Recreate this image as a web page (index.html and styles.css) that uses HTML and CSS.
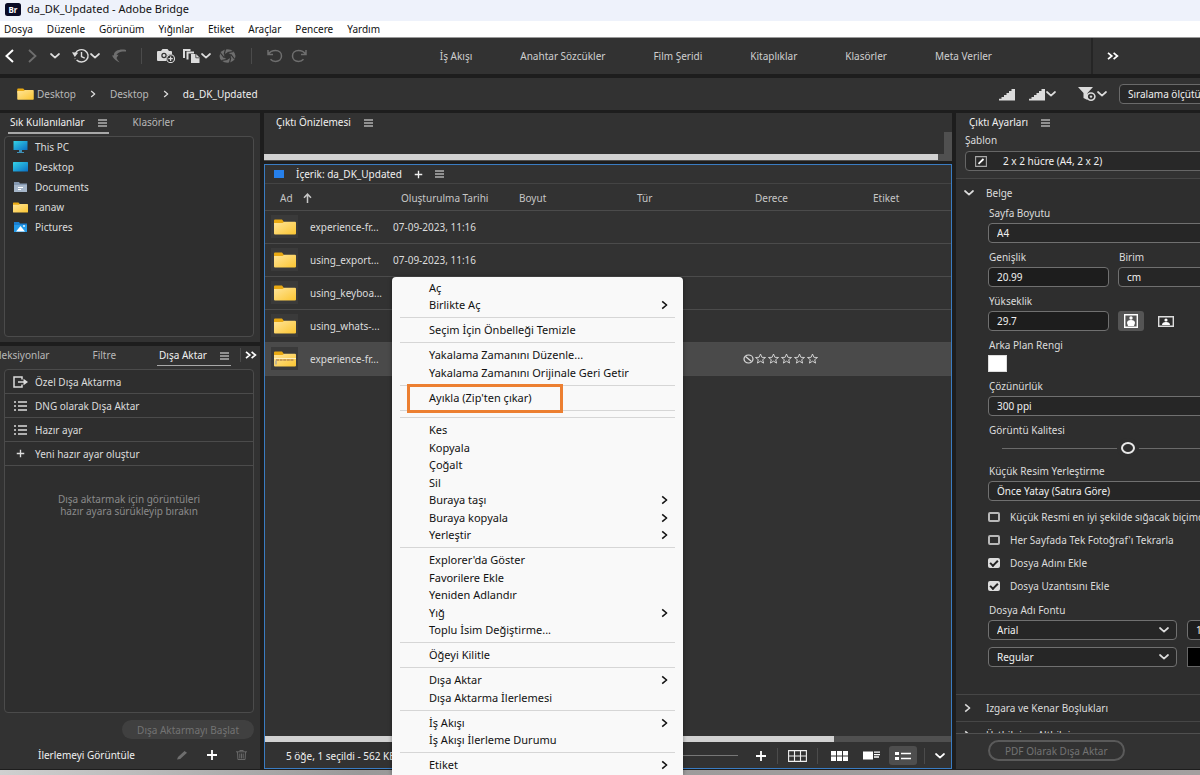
FILE: index.html
```html
<!DOCTYPE html>
<html lang="tr">
<head>
<meta charset="utf-8">
<title>da_DK_Updated - Adobe Bridge</title>
<link rel="stylesheet" href="styles.css">
</head>
<body>
<svg class="sprite" aria-hidden="true">
  <defs>
    <linearGradient id="g-folder" x1="0" y1="0" x2="1" y2="1"><stop offset="0" stop-color="#ffe59a"/><stop offset="1" stop-color="#fbc531"/></linearGradient>
    <linearGradient id="g-screen" x1="0" y1="0" x2="1" y2="1"><stop offset="0" stop-color="#35d3e6"/><stop offset="1" stop-color="#0a6fc4"/></linearGradient>
  </defs>
  <symbol id="down" viewBox="0 0 10 6"><path d="M1 1l4 3.600L9 1" fill="none" stroke="currentColor" stroke-width="1.700" stroke-linecap="round" stroke-linejoin="round"/></symbol>
  <symbol id="right" viewBox="0 0 7 10"><path d="M1.200 1.400L5.600 5l-4.400 3.600" fill="none" stroke="currentColor" stroke-width="1.600" stroke-linejoin="round"/></symbol>
  <symbol id="more" viewBox="0 0 12 8"><path d="M1 .8L4.800 4 1 7.200M6.600.8l3.800 3.200-3.800 3.200" fill="none" stroke="currentColor" stroke-width="1.700"/></symbol>
  <symbol id="burger" viewBox="0 0 9 8"><path d="M0 1h9M0 4h9M0 7h9" stroke="currentColor"/></symbol>
  <symbol id="plus" viewBox="0 0 12 12"><path d="M6 1v10M1 6h10" stroke="currentColor" stroke-width="1.800"/></symbol>
  <symbol id="folder" viewBox="0 0 22 16"><path d="M0 1.500Q0 .5 1 .5h7l2 2.500h11v4H0z" fill="#e9a912"/><path d="M0 4h8.500l1.800-1.200H21q1 0 1 1V14.500q0 1-1 1H1q-1 0-1-1z" fill="url(#g-folder)"/></symbol>
  <symbol id="list" viewBox="0 0 13 12"><path d="M4 2h9M4 6h9M4 10h9" stroke="currentColor" stroke-width="1.300"/><path d="M1 1v2M1 5v2M1 9v2" stroke="currentColor" stroke-width="1.500"/></symbol>
  <symbol id="star" viewBox="0 0 12 11"><path d="M6 1l1.400 3.300 3.600.2-2.800 2.200.9 3.400L6 8.200l-3.100 1.900.9-3.400L1 4.500l3.600-.2z" fill="none" stroke="currentColor" stroke-width=".9"/></symbol>
  <symbol id="undo" viewBox="0 0 17 14"><path d="M2 1v4.500h5M2.300 5.400C4 2.800 6.500 1.600 9.500 1.600c3.600 0 6 2.300 6 5.400s-2.500 5.400-6 5.400c-2.300 0-3.900-.9-5-2.200" fill="none" stroke="currentColor" stroke-width="1.500"/></symbol>
  <symbol id="steps" viewBox="0 0 16 13"><path d="M0 12.500v-1.700h2.500V9H5V7h2.500V5H10V3h2.500V1H16v11.500z" fill="currentColor"/></symbol>
</svg>

<div class="app">
  <header class="titlebar">
    <svg class="logo" viewBox="0 0 16 13" aria-hidden="true"><rect width="16" height="13" rx="2.500" fill="#0a0c26"/><text x="8" y="9.500" text-anchor="middle">Br</text></svg>
    <span>da_DK_Updated - Adobe Bridge</span>
  </header>

  <nav class="menubar" aria-label="Menü">
    <button>Dosya</button><button>Düzenle</button><button>Görünüm</button><button>Yığınlar</button><button>Etiket</button><button>Araçlar</button><button>Pencere</button><button>Yardım</button>
  </nav>

  <div class="toolbar">
    <div class="tools tools-nav">
      <button aria-label="Geri" class="bright"><svg width="11" height="14" viewBox="0 0 11 14"><path d="M9 1L2.500 7 9 13" fill="none" stroke="currentColor" stroke-width="2"/></svg></button>
      <button aria-label="İleri" class="dim"><svg width="11" height="14" viewBox="0 0 11 14"><path d="M2 1l6.500 6L2 13" fill="none" stroke="currentColor" stroke-width="1.800"/></svg></button>
      <button aria-label="Üst klasörler"><svg width="10" height="6"><use href="#down"/></svg></button>
      <button aria-label="Son kullanılanlar"><svg width="18" height="16" viewBox="0 0 18 16"><path d="M3.500 5.200A6.600 6.200 0 1 1 4.600 12" fill="none" stroke="currentColor" stroke-width="1.400"/><path d="M0 4.300l6.200.4L2.800 9z" fill="currentColor"/><path d="M9.500 4v4.600l3.200 1.600" fill="none" stroke="currentColor" stroke-width="1.400"/><path d="M3 10.500l.2.400" stroke="currentColor" stroke-width="1.600"/></svg><svg width="10" height="6"><use href="#down"/></svg></button>
      <button aria-label="Uygulamaya dön" class="dim"><svg width="14" height="14" viewBox="0 0 14 14"><path d="M14 1C7-.5 1 2.500 2 7l2.600.3C4 4.500 8 2 14 2.600z" fill="currentColor"/><path d="M0 6.500l6.500-.8L4.500 9q.8 2.200 3.200 4.500Q2.500 11.500 0 6.500z" fill="currentColor"/></svg></button>
    </div>
    <span class="sep"></span>
    <div class="tools tools-get">
      <button aria-label="Kameradan fotoğraf al"><svg width="18" height="14" viewBox="0 0 18 14"><path d="M0 3q0-1 1-1h3l1.500-2h5L12 2h2q1 0 1 1v2.400a4.800 4.600 0 0 0-5.500 6.600H1q-1 0-1-1z" fill="currentColor"/><circle cx="7" cy="6.500" r="2.700" fill="#323232"/><circle cx="7" cy="6.500" r="1.400" fill="currentColor"/><circle cx="13.600" cy="9.700" r="3.900" fill="#323232" stroke="currentColor" stroke-width="1.100"/><path d="M13.600 7.500v4.400M11.400 9.700h4.400" stroke="currentColor" stroke-width="1.200"/></svg></button>
      <button aria-label="Düzelt"><svg width="18" height="14" viewBox="0 0 18 14"><path d="M1 9V1h6.500M4.500 10.500v-7h6.500" fill="none" stroke="currentColor" stroke-width="2"/><path d="M8 5h5l3.500 3.500V14H8z" fill="currentColor"/><path d="M12.800 5v3.800h3.700" fill="none" stroke="#323232" stroke-width=".8"/></svg><svg width="10" height="6"><use href="#down"/></svg></button>
      <button aria-label="Camera Raw'da aç" class="dim"><svg width="17" height="14" viewBox="0 0 17 14"><ellipse cx="8.500" cy="7" rx="8" ry="6.800" fill="currentColor"/><path d="M8.500 3.600l3.300 1.700v3.400l-3.300 1.700-3.300-1.700V5.300z" fill="#323232"/><path d="M8.500 3.600L14.500 2.500M11.800 5.300L15.500 10M11.800 8.700L10.500 14M8.500 10.400l-6 1.100M5.200 8.700L1.500 4M5.200 5.300L6.500 0" stroke="#323232" stroke-width="1.200"/></svg></button>
    </div>
    <span class="sep"></span>
    <div class="tools tools-rot">
      <button aria-label="Sola döndür" class="dim"><svg width="17" height="14"><use href="#undo"/></svg></button>
      <button aria-label="Sağa döndür" class="dim"><svg class="flip" width="17" height="14"><use href="#undo"/></svg></button>
    </div>
    <nav class="workspaces" aria-label="Çalışma alanları">
      <button>İş Akışı</button><button>Anahtar Sözcükler</button><button>Film Şeridi</button><button>Kitaplıklar</button><button>Klasörler</button><button>Meta Veriler</button>
    </nav>
    <div class="ws-more"><button aria-label="Diğer çalışma alanları" class="bright"><svg width="12" height="8"><use href="#more"/></svg></button></div>
  </div>

  <div class="pathbar">
    <nav class="crumbs" aria-label="Yol">
      <a href="#desktop"><svg width="17" height="12"><use href="#folder"/></svg>Desktop</a>
      <svg width="6" height="8"><use href="#right"/></svg>
      <a href="#desktop2">Desktop</a>
      <svg width="6" height="8"><use href="#right"/></svg>
      <a href="#current" class="current">da_DK_Updated</a>
    </nav>
    <div class="path-tools">
      <button aria-label="Hızlı küçük resimler"><svg width="16" height="13"><use href="#steps"/></svg></button>
      <button aria-label="Küçük resim kalitesi"><svg width="16" height="13"><use href="#steps"/></svg><svg width="10" height="6"><use href="#down"/></svg></button>
      <span class="sep"></span>
      <button aria-label="Filtrele"><svg width="18" height="14" viewBox="0 0 18 14"><path d="M0 0h15L9.500 6v7L5.500 11V6z" fill="currentColor"/><ellipse cx="13" cy="9.600" rx="3.900" ry="3.600" fill="#323232" stroke="currentColor" stroke-width="1.600"/><circle cx="13" cy="9.600" r="1.200" fill="currentColor"/></svg><svg width="10" height="6"><use href="#down"/></svg></button>
      <select class="sort" aria-label="Sıralama"><option>Sıralama ölçütü</option></select>
    </div>
  </div>

  <main class="panels">
    <div class="left">
      <section class="panel favorites">
        <div class="tabs">
          <button class="tab on">Sık Kullanılanlar <svg width="9" height="8"><use href="#burger"/></svg></button>
          <button class="tab">Klasörler</button>
        </div>
        <ul class="well">
          <li><svg width="15" height="12" viewBox="0 0 15 12"><rect x=".5" width="14" height="9" fill="url(#g-screen)"/><path d="M6 9h3v2h2v1H4v-1h2z" fill="#3f8fb5"/></svg>This PC</li>
          <li><svg width="15" height="12" viewBox="0 0 15 12"><rect y="1" width="15" height="9.500" rx=".5" fill="url(#g-screen)"/></svg>Desktop</li>
          <li><svg width="15" height="12" viewBox="0 0 15 12"><path d="M1 1h5l1 1.500h7V11H1z" fill="#8598b0"/><path d="M1 4h13v7H1z" fill="#a6b6c9"/><path d="M5 6.500h5M5 8.500h3" stroke="#fff"/></svg>Documents</li>
          <li><svg width="15" height="11"><use href="#folder"/></svg>ranaw</li>
          <li><svg width="15" height="12" viewBox="0 0 15 12"><path d="M1 1h5l1 1.500h7V11H1z" fill="#1b7fd0"/><path d="M1 4h13v7H1z" fill="#239bea"/><path d="M3 10.500L7.500 5l4.500 5.500z" fill="#fff"/><circle cx="11" cy="5" r=".9" fill="#fff"/></svg>Pictures</li>
        </ul>
      </section>
      <section class="panel export">
        <div class="tabs tabs-end">
          <button class="tab">Koleksiyonlar</button>
          <button class="tab">Filtre</button>
          <button class="tab on">Dışa Aktar <svg width="9" height="8"><use href="#burger"/></svg></button>
          <button class="tab-more bright" aria-label="Diğer sekmeler"><svg width="12" height="8"><use href="#more"/></svg></button>
        </div>
        <div class="well presets">
          <button class="preset"><svg width="15" height="12" viewBox="0 0 15 12"><path d="M9 3.500V1H1v10h8V8.500" fill="none" stroke="currentColor" stroke-width="1.500"/><path d="M5 6h6" stroke="currentColor" stroke-width="1.500"/><path d="M10.500 2.800L15 6l-4.500 3.200z" fill="currentColor"/></svg>Özel Dışa Aktarma</button>
          <button class="preset"><svg width="15" height="12"><use href="#list"/></svg>DNG olarak Dışa Aktar</button>
          <button class="preset"><svg width="15" height="12"><use href="#list"/></svg>Hazır ayar</button>
          <button class="preset"><svg width="15" height="9"><use href="#plus"/></svg>Yeni hazır ayar oluştur</button>
          <p class="hint">Dışa aktarmak için görüntüleri<br>hazır ayara sürükleyip bırakın</p>
        </div>
        <div class="export-start"><button class="pill" disabled>Dışa Aktarmayı Başlat</button></div>
        <div class="export-foot">
          <button class="progress">İlerlemeyi Görüntüle</button>
          <button class="dim" aria-label="Düzenle"><svg width="11" height="10" viewBox="0 0 11 10"><path d="M0 9.500L1 7l6.500-6 2.500 1.800L3.200 9z" fill="currentColor"/></svg></button>
          <button class="bright" aria-label="Ekle"><svg width="12" height="12"><use href="#plus"/></svg></button>
          <button class="dim" aria-label="Sil"><svg width="11" height="10" viewBox="0 0 11 10"><path d="M0 1.800h11M3.800 1.500V.5h3.400v1M1.500 2l.4 7.500h7.200L9.500 2M3.800 3.500v5M5.500 3.500v5M7.200 3.500v5" fill="none" stroke="currentColor" stroke-width=".9"/></svg></button>
        </div>
      </section>
    </div>

    <div class="center">
      <section class="panel preview">
        <div class="tabs"><button class="tab on">Çıktı Önizlemesi <svg width="9" height="8"><use href="#burger"/></svg></button></div>
        <div class="scroll-v"></div>
        <div class="scroll-h"><span></span></div>
      </section>
      <section class="panel content">
        <div class="content-head"><span class="swatch-blue"></span><span>İçerik: da_DK_Updated</span><button aria-label="Yeni sekme"><svg width="9" height="9"><use href="#plus"/></svg></button><button aria-label="Panel menüsü"><svg width="9" height="8"><use href="#burger"/></svg></button></div>
        <table class="files">
          <colgroup><col class="c-name"><col class="c-date"><col class="c-std"><col class="c-std"><col class="c-std"><col></colgroup>
          <thead><tr><th><span class="sorted">Ad <svg width="9" height="10" viewBox="0 0 9 10"><path d="M4.500 10V1.500M1 4.800l3.500-3.600L8 4.800" fill="none" stroke="currentColor" stroke-width="1.500"/></svg></span></th><th class="th-date">Oluşturulma Tarihi</th><th>Boyut</th><th>Tür</th><th>Derece</th><th>Etiket</th></tr></thead>
          <tbody>
            <tr><td><span class="file"><span class="thumb"><svg width="22" height="16"><use href="#folder"/></svg></span>experience-fr...</span></td><td>07-09-2023, 11:16</td><td></td><td></td><td></td><td></td></tr>
            <tr><td><span class="file"><span class="thumb"><svg width="22" height="16"><use href="#folder"/></svg></span>using_export...</span></td><td>07-09-2023, 11:16</td><td></td><td></td><td></td><td></td></tr>
            <tr><td><span class="file"><span class="thumb"><svg width="22" height="16"><use href="#folder"/></svg></span>using_keyboa...</span></td><td></td><td></td><td></td><td></td><td></td></tr>
            <tr><td><span class="file"><span class="thumb"><svg width="22" height="16"><use href="#folder"/></svg></span>using_whats-...</span></td><td></td><td></td><td></td><td></td><td></td></tr>
            <tr class="selected"><td><span class="file"><span class="thumb"><svg width="22" height="16" viewBox="0 0 22 16"><use href="#folder"/><path d="M0 7.500h22" stroke="#fff0c0"/><path d="M2 9h18" stroke="#b5894c" stroke-width="1.400" stroke-dasharray="3 .6"/><path d="M2 9.500v4" stroke="#a8a8a0" stroke-width="1.400"/></svg></span>experience-fr...</span></td><td></td><td></td><td></td>
              <td class="rating"><span class="stars"><svg width="11" height="10" viewBox="0 0 11 10"><ellipse cx="5.500" cy="5" rx="4.500" ry="4" fill="none" stroke="currentColor" stroke-width="1.200"/><path d="M2.500 2.500l6 5" stroke="currentColor" stroke-width="1.200"/></svg><svg width="13" height="11"><use href="#star"/></svg><svg width="13" height="11"><use href="#star"/></svg><svg width="13" height="11"><use href="#star"/></svg><svg width="13" height="11"><use href="#star"/></svg><svg width="13" height="11"><use href="#star"/></svg></span></td><td></td></tr>
          </tbody>
        </table>
        <div class="content-scroll"><span></span></div>
        <footer class="status">
          <span class="count">5 öğe, 1 seçildi - 562 KB</span>
          <span class="zoomline"></span>
          <button class="bright" aria-label="Büyüt"><svg width="12" height="12"><use href="#plus"/></svg></button>
          <span class="sep"></span>
          <button aria-label="Izgara kilidi"><svg width="19" height="12" viewBox="0 0 19 12"><path d="M.6.6h17.800v10.800H.6zM6.500 1v10M12.500 1v10M1 6h17" fill="none" stroke="currentColor" stroke-width="1.100"/></svg></button>
          <span class="sep"></span>
          <button class="bright view" aria-label="Küçük resimler"><svg width="17" height="10" viewBox="0 0 17 10"><path d="M0 0h5v4.400H0zM6 0h5v4.400H6zM12 0h5v4.400h-5zM0 5.600h5V10H0zM6 5.600h5V10H6zM12 5.600h5V10h-5z" fill="currentColor"/></svg></button>
          <button class="bright view" aria-label="Ayrıntılar"><svg width="17" height="9" viewBox="0 0 17 9"><path d="M0 .5h10v8H0z" fill="currentColor"/><path d="M11 1.200h6M11 3.600h6M11 6h5" stroke="currentColor" stroke-width="1.300"/></svg></button>
          <button class="bright view active" aria-label="Liste"><svg width="16" height="8" viewBox="0 0 16 8"><path d="M0 0h4v3H0zM0 5h4v3H0z" fill="currentColor"/><path d="M6 1.500h10M6 6.500h10" stroke="currentColor" stroke-width="1.600"/></svg></button>
          <span class="sep"></span>
          <button class="bright" aria-label="Görünüm seçenekleri"><svg width="10" height="6"><use href="#down"/></svg></button>
        </footer>
      </section>
    </div>

    <section class="panel settings">
      <div class="settings-top">
        <div class="tabs"><button class="tab on">Çıktı Ayarları <svg width="9" height="8"><use href="#burger"/></svg></button></div>
        <label class="template-label" for="tpl">Şablon</label>
        <div class="template"><svg width="12" height="11" viewBox="0 0 12 11"><path d="M.6.6h10.800v9.800H.6z" fill="none" stroke="#aaa" stroke-width="1.100"/><path d="M3.500 7.800L8.500 3" stroke="#fff" stroke-width="1.800"/></svg><select id="tpl"><option>2 x 2 hücre (A4, 2 x 2)</option></select></div>
      </div>
      <div class="settings-scroll">
        <h2 class="group"><svg width="10" height="6"><use href="#down"/></svg>Belge</h2>
        <div class="form">
          <div class="field"><label for="size">Sayfa Boyutu</label><select id="size" class="control"><option>A4</option></select></div>
          <div class="pair">
            <div class="field short"><label for="w">Genişlik</label><input id="w" class="control" value="20.99"></div>
            <div class="field"><label for="unit">Birim</label><select id="unit" class="control"><option>cm</option></select></div>
          </div>
          <div class="pair">
            <div class="field short"><label for="h">Yükseklik</label><input id="h" class="control" value="29.7"></div>
            <button class="orient on" aria-label="Dikey"><svg width="14" height="14" viewBox="0 0 14 14"><path d="M.7.7h12.600v12.600H.7z" fill="none" stroke="#fff" stroke-width="1.400"/><circle cx="7" cy="4" r="1.700" fill="#fff"/><path d="M3 9q0-3 4-3t4 3l-1 3H4z" fill="#fff"/></svg></button>
            <button class="orient" aria-label="Yatay"><svg width="16" height="11" viewBox="0 0 16 11"><path d="M.7.7h14.600v9.600H.7z" fill="none" stroke="#ddd" stroke-width="1.400"/><circle cx="8" cy="4" r="1.600" fill="#fff"/><path d="M4 9q0-3 4-3t4 3z" fill="#fff"/></svg></button>
          </div>
          <div class="field"><label for="bg">Arka Plan Rengi</label><button id="bg" class="color" aria-label="Beyaz"></button></div>
          <div class="field"><label for="res">Çözünürlük</label><select id="res" class="control"><option>300 ppi</option></select></div>
          <div class="field"><label for="q">Görüntü Kalitesi</label><input id="q" type="range" min="0" max="100" value="50"></div>
          <div class="field"><label for="place">Küçük Resim Yerleştirme</label><select id="place" class="control"><option>Önce Yatay (Satıra Göre)</option></select></div>
          <div class="checks">
            <label><input type="checkbox">Küçük Resmi en iyi şekilde sığacak biçimde</label>
            <label><input type="checkbox">Her Sayfada Tek Fotoğraf'ı Tekrarla</label>
            <label><input type="checkbox" checked>Dosya Adını Ekle</label>
            <label><input type="checkbox" checked>Dosya Uzantısını Ekle</label>
          </div>
          <div class="field"><label for="font">Dosya Adı Fontu</label>
            <div class="font-row"><span class="pick"><select id="font" class="control"><option>Arial</option></select><svg width="10" height="6"><use href="#down"/></svg></span><input class="control size" aria-label="Yazı boyutu" value="12"></div>
          </div>
          <div class="font-row"><span class="pick"><select class="control" aria-label="Yazı stili"><option>Regular</option></select><svg width="10" height="6"><use href="#down"/></svg></span><button class="ink" aria-label="Yazı rengi"></button></div>
        </div>
        <h2 class="group closed first"><svg width="7" height="10"><use href="#right"/></svg>Izgara ve Kenar Boşlukları</h2>
        <h2 class="group closed"><svg width="7" height="10"><use href="#right"/></svg>Üstbilgi ve Altbilgi</h2>
      </div>
      <div class="settings-foot"><button class="pill outline" disabled>PDF Olarak Dışa Aktar</button></div>
    </section>
  </main>
  <div class="desk"></div>

  <div class="context" role="menu">
    <button role="menuitem">Aç</button>
    <button role="menuitem">Birlikte Aç<svg width="7" height="10"><use href="#right"/></svg></button>
    <hr>
    <button role="menuitem">Seçim İçin Önbelleği Temizle</button>
    <hr>
    <button role="menuitem">Yakalama Zamanını Düzenle...</button>
    <button role="menuitem">Yakalama Zamanını Orijinale Geri Getir</button>
    <hr>
    <button role="menuitem" class="marked">Ayıkla (Zip'ten çıkar)</button>
    <hr>
    <hr>
    <button role="menuitem">Kes</button>
    <button role="menuitem">Kopyala</button>
    <button role="menuitem">Çoğalt</button>
    <button role="menuitem">Sil</button>
    <button role="menuitem">Buraya taşı<svg width="7" height="10"><use href="#right"/></svg></button>
    <button role="menuitem">Buraya kopyala<svg width="7" height="10"><use href="#right"/></svg></button>
    <button role="menuitem">Yerleştir<svg width="7" height="10"><use href="#right"/></svg></button>
    <hr>
    <button role="menuitem">Explorer'da Göster</button>
    <button role="menuitem">Favorilere Ekle</button>
    <button role="menuitem">Yeniden Adlandır</button>
    <button role="menuitem">Yığ<svg width="7" height="10"><use href="#right"/></svg></button>
    <button role="menuitem">Toplu İsim Değiştirme...</button>
    <hr>
    <button role="menuitem">Öğeyi Kilitle</button>
    <hr>
    <button role="menuitem">Dışa Aktar<svg width="7" height="10"><use href="#right"/></svg></button>
    <button role="menuitem">Dışa Aktarma İlerlemesi</button>
    <hr>
    <button role="menuitem">İş Akışı<svg width="7" height="10"><use href="#right"/></svg></button>
    <button role="menuitem">İş Akışı İlerleme Durumu</button>
    <hr>
    <button role="menuitem">Etiket<svg width="7" height="10"><use href="#right"/></svg></button>
  </div>
</div>
</body>
</html>
```
FILE: styles.css
```css
:root {
  --panel: #323232;
  --well: #2e2e2e;
  --gap: #1d1d1d;
  --line: #4b4b4b;
  --text: #dcdcdc;
  --muted: #b8b8b8;
}

*, *::before, *::after { box-sizing: border-box; }

body {
  margin: 0;
  font: 10px/14px "Noto Sans", "Open Sans", sans-serif;
  color: var(--text);
  background: var(--gap);
}

button, input, select {
  font: inherit;
  color: inherit;
  margin: 0;
  padding: 0;
  border: 0;
  background: none;
}

button { display: inline-flex; align-items: center; white-space: nowrap; }
select { appearance: none; }
svg { display: block; flex: none; }
ul, p, h2 { margin: 0; padding: 0; font-weight: 400; font-size: inherit; list-style: none; }
.sprite { position: absolute; width: 0; height: 0; }

.app {
  position: relative;
  display: flex;
  flex-direction: column;
  height: 100vh;
  overflow: hidden;
}

.bright { color: #fff; }
.dim { color: #6e6e6e; }
.sep { width: 1px; height: 16px; background: var(--line); }

/* Window chrome */
.titlebar {
  display: flex;
  align-items: center;
  gap: 6px;
  height: 21px;
  padding: 0 5px 3px;
  font-size: 11px;
  color: #111;
  background: #eef2fb;
}
.logo { width: 16px; height: 13px; }
.logo text { font: 700 8px "Noto Sans", sans-serif; fill: #fff; }

.menubar {
  display: flex;
  gap: 14px;
  height: 17px;
  padding: 0 4px;
  color: #111;
  background: #fff;
  border-bottom: 1px solid #999;
}

/* Toolbar */
.toolbar {
  display: flex;
  align-items: center;
  height: 36px;
  flex: none;
  padding-left: 4px;
  background: var(--panel);
}
.tools { display: flex; align-items: center; }
.tools-nav { gap: 12px; margin-right: 15px; }
.tools-get { gap: 8px; margin: 0 15px; }
.tools-rot { gap: 8px; margin: 0 14px; }
.flip { transform: scaleX(-1); }

.workspaces {
  display: flex;
  gap: 48px;
  margin-left: auto;
  padding-right: 99px;
  color: #cfcfcf;
}
.ws-more {
  display: flex;
  align-items: center;
  align-self: stretch;
  width: 109px;
  padding-left: 14px;
  border-left: 2px solid #252525;
}

/* Path bar */
.pathbar {
  display: flex;
  align-items: center;
  justify-content: space-between;
  flex: none;
  height: 32px;
  margin: 4px 0 3px;
  padding-left: 17px;
  background: var(--panel);
}
.crumbs { display: flex; align-items: center; gap: 14px; }
.crumbs a { display: flex; align-items: center; gap: 3px; color: var(--muted); text-decoration: none; }
.crumbs .current { color: #f0f0f0; }
.path-tools { display: flex; align-items: center; gap: 12px; width: 201px; overflow: hidden; flex: none; }
.path-tools button { gap: 1px; }
.path-tools button:first-child { margin-right: 2px; }
.path-tools .sep { margin-right: -2px; }
.sort {
  flex: none;
  width: 130px;
  height: 20px;
  padding: 0 8px;
  border: 1px solid #6a6a6a;
  border-radius: 4px;
  background: #282828;
  color: #f0f0f0;
}

/* Panels */
.panels {
  flex: 1;
  min-height: 0;
  display: grid;
  grid-template-columns: 260px minmax(0, 1fr) 244px;
  gap: 4px;
}
.panel { background: var(--panel); min-width: 0; }
.left, .center { display: flex; flex-direction: column; gap: 3px; min-width: 0; min-height: 0; }
.left { gap: 4px; }

.tabs { display: flex; align-items: flex-start; gap: 22px; height: 20px; padding: 2px 8px 0; }
.tab { gap: 13px; padding: 0 2px 2px; color: var(--muted); line-height: 15px; }
.tab.on { color: #f0f0f0; }
.left .tab.on { border-bottom: 2px solid #a8a8a8; }
.tab-more { height: 14px; padding-left: 4px; border-left: 1px solid var(--line); }

.well { border: 1px solid var(--line); border-radius: 4px; background: var(--well); }

.favorites { height: 229px; padding-bottom: 5px; display: flex; flex-direction: column; }
.favorites .well { flex: 1; margin: 3px 6px 0 4px; padding: 0 8px; }
.favorites li { display: flex; align-items: center; gap: 7px; height: 20px; }

.export { flex: 1; display: flex; flex-direction: column; min-height: 0; }
.tabs-end { justify-content: flex-end; gap: 39px; padding-right: 3px; overflow: hidden; }
.tabs-end .tab-more { margin-left: -30px; }
.presets { flex: 1; margin: 3px 6px 0 4px; }
.preset {
  display: flex;
  gap: 7px;
  width: 100%;
  height: 24px;
  padding: 0 8px;
  border-bottom: 1px solid var(--line);
}
.hint { padding-top: 27px; text-align: center; line-height: 12px; color: #8a8a8a; }
.export-start { display: flex; justify-content: flex-end; padding: 7px 6px 0; }
.pill { height: 19px; padding: 0 15px; border-radius: 10px; background: #404040; color: #737373; }
.export-foot { display: flex; align-items: center; gap: 18px; height: 30px; padding: 2px 13px 0 38px; }
.progress { margin-right: auto; color: #f0f0f0; }

.preview { display: grid; grid-template-columns: 1fr 8px; grid-template-rows: 41px 7px; height: 48px; }
.preview .tabs { padding-left: 10px; }
.scroll-v { margin-top: 19px; background: #505050; }
.scroll-h { grid-column: 1 / 3; background: #505050; }
.scroll-h span, .content-scroll span { display: block; width: 98%; height: 6px; background: #d2d2d2; }

.content { flex: 1; min-height: 0; display: flex; flex-direction: column; border: 1px solid #3a7cc2; }
.content-head { display: flex; align-items: center; gap: 12px; height: 19px; padding-left: 9px; color: #f0f0f0; border-bottom: 1px solid #444; }
.swatch-blue { width: 10px; height: 8px; background: #2680eb; }

.files { width: 100%; table-layout: fixed; border-collapse: collapse; }
.c-name { width: 120px; }
.c-date { width: 122px; }
.c-std { width: 118px; }
.files th { height: 26px; padding: 2px 12px 0; text-align: left; font-weight: 400; color: #c6c6c6; border-bottom: 1px solid var(--line); }
.files th:first-child { padding-left: 15px; }
.files .th-date { padding-left: 16px; }
.sorted { display: flex; align-items: center; gap: 10px; }
.files td { height: 33px; padding: 0 8px; white-space: nowrap; border-bottom: 1px solid var(--line); }
.files td:first-child { padding: 0 0 0 6px; }
.files .rating { padding: 0; }
.file { display: flex; align-items: center; gap: 12px; }
.thumb { display: grid; place-items: center; width: 27px; height: 23px; background: #3a3a3a; }
.selected { background: #4a4a4a; }
.stars { display: flex; align-items: center; gap: 0; }

.content-scroll { margin-top: auto; background: #505050; }
.content-scroll span { width: 83%; height: 6px; }
.status { display: flex; align-items: center; height: 26px; padding: 1px 6px 0 21px; gap: 10px; color: #f0f0f0; }
.count { white-space: nowrap; }
.zoomline { width: 90px; height: 1px; margin: 0 7px 0 auto; background: #777; }
.status .view { justify-content: center; width: 28px; height: 19px; border-radius: 3px; margin: 0 -3px; }
.status .view.active { background: #4e4e4e; }

/* Output settings */
.settings { display: flex; flex-direction: column; min-height: 0; overflow: hidden; }
.settings-top { flex: none; padding: 0 0 7px 9px; border-bottom: 1px solid #464646; }
.settings-top .tabs { padding-left: 2px; }
.template-label { display: block; margin-bottom: 4px; }
.template { display: flex; align-items: center; gap: 14px; width: 280px; height: 20px; padding-left: 9px; border: 1px solid #666; border-radius: 4px; background: #282828; }
.template select { flex: 1; padding-left: 2px; color: #f0f0f0; }
.settings-scroll { flex: 1; min-height: 0; overflow: hidden; background: var(--well); }
.group { display: flex; align-items: center; gap: 12px; height: 27px; padding-left: 8px; white-space: nowrap; }
.group.closed { gap: 15px; border-top: 1px solid #464646; }
.group.first { margin-top: 27px; }
.form { display: flex; flex-direction: column; gap: 7px; width: 312px; padding: 0 0 0 32px; }
.field { display: flex; flex-direction: column; gap: 3px; flex: 1; }
.field > label { padding-left: 1px; }
.short { flex: none; width: 121px; }
.control { width: 100%; height: 20px; padding: 0 8px; border: 1px solid #707070; border-radius: 4px; background: #262626; color: #f0f0f0; }
input.control { background: #1d1d1d; }
.pair { display: flex; align-items: flex-end; gap: 9px; }
.orient { justify-content: center; width: 26px; height: 20px; border-radius: 3px; }
.orient.on { background: #555; }
.color { width: 19px; height: 17px; background: #fff; border: 1px solid #ddd; }

input[type="range"] { appearance: none; width: 252px; height: 17px; margin-left: 14px; }
input[type="range"]::-webkit-slider-runnable-track { height: 1px; background: #6a6a6a; }
input[type="range"]::-webkit-slider-thumb {
  appearance: none;
  box-sizing: border-box;
  width: 14px;
  height: 12px;
  margin-top: -6px;
  border: 2px solid #e8e8e8;
  border-radius: 50%;
  background: var(--well);
  box-shadow: 0 0 0 4px var(--well);
}

.checks { display: flex; flex-direction: column; gap: 9px; padding: 2px 0 3px; white-space: nowrap; }
.checks label { display: flex; align-items: center; gap: 10px; }
.checks input { appearance: none; width: 12px; height: 10px; border: 2px solid #b8b8b8; border-radius: 2px; display: grid; place-items: center; }
.checks input:checked { background: #dcdcdc; border-width: 0; }
.checks input:checked::after { content: ""; width: 8px; height: 5px; margin-bottom: 2px; border: solid #222; border-width: 0 0 2px 2px; transform: rotate(-45deg); }

.font-row { display: flex; gap: 10px; }
.pick { display: grid; align-items: center; width: 189px; }
.pick > * { grid-area: 1 / 1; }
.pick svg { justify-self: end; margin-right: 8px; pointer-events: none; }
.size { width: 60px; }
.ink { width: 60px; height: 20px; background: #000; border: 1px solid #666; }

.settings-foot { flex: none; height: 36px; padding: 6px 0 0 32px; border-top: 1px solid #505050; }
.outline { height: 21px; border: 2px solid #5a5a5a; border-radius: 11px; background: none; }

.desk { flex: none; height: 5px; margin-top: 1px; background: linear-gradient(90deg, #d0d0d0, #999 30%, #a39f9f); }

/* Context menu */
.context {
  position: absolute;
  left: 392px;
  top: 277px;
  bottom: 0;
  display: flex;
  flex-direction: column;
  justify-content: space-between;
  width: 291px;
  padding: 2px 8px 1px;
  border-radius: 4px 4px 0 0;
  background: #f9f9f9;
  color: #111;
  font-size: 11px;
  box-shadow: 0 0 4px rgba(0, 0, 0, .4);
}
.context button { position: relative; justify-content: space-between; height: 17px; padding: 0 7px 0 29px; }
.context hr { width: 100%; height: 1px; margin: 3px 0; border: 0; background: #d6d6d6; }
.marked::before {
  content: "";
  position: absolute;
  z-index: 1;
  left: 7px;
  top: -5px;
  width: 156px;
  height: 29px;
  border: 3px solid #ec7f31;
}
```
